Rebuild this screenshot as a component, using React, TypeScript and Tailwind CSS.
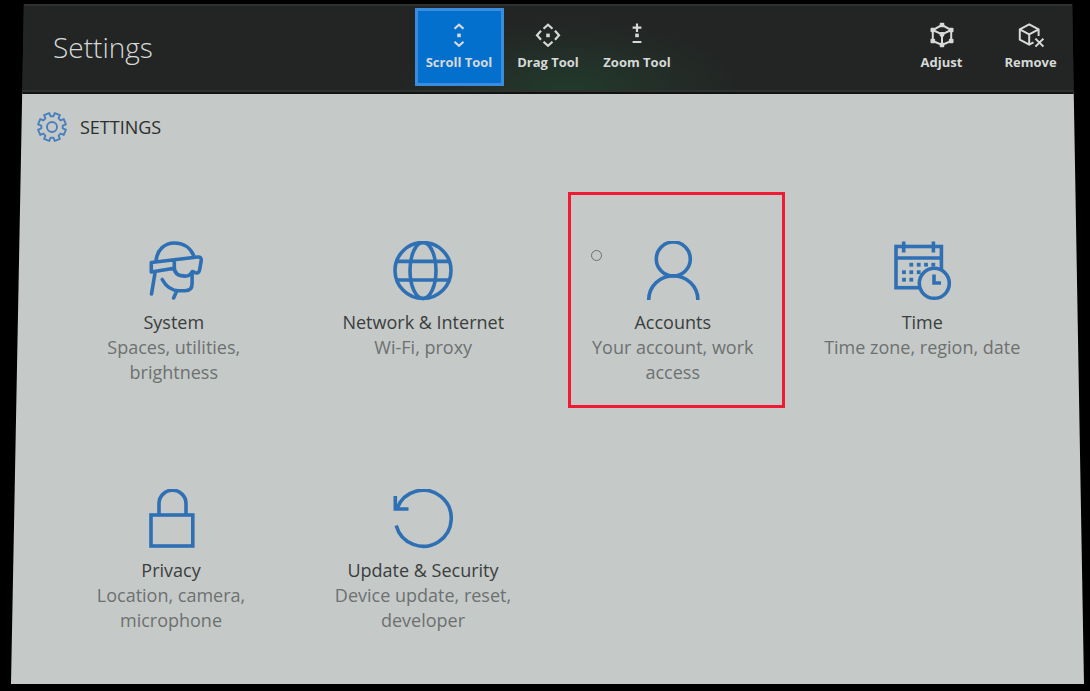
import type { ReactNode } from "react";

function ToolIcon({ children }: { children: ReactNode }) {
  return (
    <svg viewBox="0 0 26 26" className="size-[26px] shrink-0" fill="none" stroke="currentColor" strokeWidth="2.2" aria-hidden="true">
      {children}
    </svg>
  );
}

function TileIcon({ children }: { children: ReactNode }) {
  return (
    <svg viewBox="0 0 60 60" className="size-[60px] shrink-0 text-[#2f70b5]" fill="none" stroke="currentColor" strokeWidth="3.6" aria-hidden="true">
      {children}
    </svg>
  );
}

const dot = <rect x="11.2" y="11.6" width="3.6" height="3.6" fill="currentColor" stroke="none" />;

const tools = [
  {
    label: "Scroll Tool",
    active: true,
    icon: (
      <ToolIcon>
        <path d="M8.5 6.8 13 2.8l4.5 4M8.5 19.8l4.5 4 4.5-4" />
        {dot}
      </ToolIcon>
    ),
  },
  {
    label: "Drag Tool",
    active: false,
    icon: (
      <ToolIcon>
        <path d="M8.5 6.8 13 2.8l4.5 4M8.5 19.8l4.5 4 4.5-4M6 8.8l-4 4.5 4 4.5M20 8.8l4 4.5-4 4.5" />
        {dot}
      </ToolIcon>
    ),
  },
  {
    label: "Zoom Tool",
    active: false,
    icon: (
      <ToolIcon>
        <path d="M8.6 5.6h8.8M13 1.4v8.6M8.6 20h8.8" />
        {dot}
      </ToolIcon>
    ),
  },
];

const adjustNodes = [
  [13, 3],
  [13, 23],
  [3.8, 8],
  [22.2, 8],
  [3.8, 19],
  [22.2, 19],
  [13, 12.3],
];

const actions = [
  {
    label: "Adjust",
    active: false,
    icon: (
      <ToolIcon>
        <path strokeWidth="2" d="M13 3 22.200 8v11L13 23 3.800 19V8zM3.800 8l9.200 4.300L22.200 8M13 12.300V23" />
        {adjustNodes.map(([x, y]) => (
          <rect key={`${x}-${y}`} x={x - 2.3} y={y - 2.3} width="4.6" height="4.6" rx="1" fill="currentColor" stroke="none" />
        ))}
      </ToolIcon>
    ),
  },
  {
    label: "Remove",
    active: false,
    icon: (
      <ToolIcon>
        <path strokeWidth="2" d="M20.600 14V7.400l-9.400-5-9.400 5v10.200l9.400 5 4.300-2.200M1.800 7.400l9.400 5 9.400-5M11.200 12.400v10.200" />
        <path strokeWidth="2" d="m17.400 16.600 8 8M25.400 16.600l-8 8" />
      </ToolIcon>
    ),
  },
];

function ToolButton({ label, icon, active }: { label: string; icon: ReactNode; active: boolean }) {
  return (
    <button
      type="button"
      className={`flex h-[78px] w-[89px] flex-col items-center gap-[6px] border-[3px] pt-[11px] text-[13px] leading-4 font-bold whitespace-nowrap text-[#d6d9d8] ${
        active ? "border-[#3c8cdd] bg-[#0470ce]" : "border-transparent"
      }`}
    >
      {icon}
      {label}
    </button>
  );
}

const calendarDots = [
  [19.3, 23.7],
  [26.7, 23.7],
  [34, 23.7],
  [41.3, 23.7],
  [12, 31.2],
  [19.3, 31.2],
  [26.7, 31.2],
  [12, 38.7],
  [19.3, 38.7],
];

const systemIcon = (
  <TileIcon>
    <g strokeLinejoin="round">
      <path d="M12 20C13 8.500 21 2 30.500 2 40 2 47 7.500 50 15.500" />
      <path d="M30.300 27.300 7.300 31V21.500L53.500 16c2.800-.3 4 1 3.700 3.600L55.800 28c-.5 3.200-2 4.300-4 3.900l-3.500-1.400c-1.600 3.200-3.300 4.600-7 4.600-6.800 0-11-2.600-11-8.600v-7" />
      <path strokeLinecap="round" d="M11 32 7.500 53M18.200 38.500C21.500 44.500 27 49.700 35 49.700h6c4.600 0 7.100-2.500 7.100-7V33M32.500 50.500 29.600 57" />
    </g>
  </TileIcon>
);

const networkIcon = (
  <TileIcon>
    <circle cx="30" cy="29.500" r="28" />
    <ellipse cx="30" cy="29.500" rx="13" ry="28" />
    <path d="M3.500 20.400h53M3.500 39h53" />
  </TileIcon>
);

const accountsIcon = (
  <TileIcon>
    <circle cx="30.300" cy="18" r="17" />
    <path d="M5.700 59a24.600 24.300 0 0 1 49.200 0" />
  </TileIcon>
);

const timeIcon = (
  <TileIcon>
    <rect x="4" y="5.500" width="45.400" height="41.200" />
    <path d="M4 17h45.400M11.700 .5v11M41.400 .5v11" />
    {calendarDots.map(([x, y]) => (
      <rect key={`${x}-${y}`} x={x - 1.9} y={y - 1.9} width="3.800" height="3.800" fill="currentColor" stroke="none" />
    ))}
    <circle cx="42.300" cy="42.300" r="15" fill="#c5c9c8" />
    <path d="M42 33.500V42h7" />
  </TileIcon>
);

const privacyIcon = (
  <TileIcon>
    <rect x="10" y="26" width="41.800" height="31" />
    <path d="M18 26V14.500a13.500 13.300 0 0 1 27 0V26" />
  </TileIcon>
);

const updateIcon = (
  <TileIcon>
    <path d="M3.200 36.500A28 28 0 1 0 4 19.500" />
    <path d="M2.300 7v13h13.200" />
  </TileIcon>
);

const firstRow = [
  { title: "System", text: "Spaces, utilities, brightness", icon: systemIcon },
  { title: "Network & Internet", text: "Wi-Fi, proxy", icon: networkIcon },
  { title: "Accounts", text: "Your account, work access", icon: accountsIcon, marked: true },
  { title: "Time", text: "Time zone, region, date", icon: timeIcon },
];

const secondRow = [
  { title: "Privacy", text: "Location, camera, microphone", icon: privacyIcon },
  { title: "Update & Security", text: "Device update, reset, developer", icon: updateIcon },
];

function Tile({ title, text, icon, marked }: { title: string; text: string; icon: ReactNode; marked?: boolean }) {
  return (
    <a
      href="#"
      className="relative flex min-h-[216px] w-[217px] flex-col items-center justify-self-center px-2 pt-[49px] text-center text-lg leading-[25px]"
    >
      {icon}
      <span className="mt-[9px] whitespace-nowrap text-[#3a3e3d]">{title}</span>
      <span className="text-[#6d7170]">{text}</span>
      {marked && (
        <span className="absolute inset-y-0 -right-1 left-1 border-[3px] border-[#f01a35]">
          <span className="absolute top-[55px] left-[20px] block size-[11px] rounded-full border border-[#6b6f6e]" />
        </span>
      )}
    </a>
  );
}

/* Eight-toothed outline; the notches sit on the axes. */
const gearPath =
  Array.from({ length: 8 }, (_, i) => {
    const mid = ((i + 0.5) * Math.PI) / 4;
    return [
      [-0.26, 10.8],
      [-0.2, 14.2],
      [0.2, 14.2],
      [0.26, 10.8],
    ]
      .map(([offset, radius], j) => {
        const x = (16 + radius * Math.cos(mid + offset)).toFixed(2);
        const y = (16 + radius * Math.sin(mid + offset)).toFixed(2);
        return `${i === 0 && j === 0 ? "M" : "L"}${x} ${y}`;
      })
      .join("");
  }).join("") + "Z";

export default function App() {
  return (
    <div className="flex min-h-screen flex-col bg-black pt-1 pr-[6px] pb-[7px] pl-[11px] font-['Open_Sans','Noto_Sans',sans-serif]">
      <div className="flex flex-1 flex-col [clip-path:polygon(1.2%_0,98.9%_0,100%_100%,0_100%)]">
        <header className="grid grid-cols-[1fr_auto_1fr] border-y-2 border-[#2e3130] bg-[#232524] bg-[radial-gradient(ellipse_170px_70px_at_52%_100%,#223a2c,#232524)] pt-[2px] pb-[4px] pl-px">
          <h1 className="self-center pl-[41px] text-[28px] leading-9 font-light text-[#d6d9d8]">Settings</h1>
          <nav className="flex" aria-label="Tools">
            {tools.map((tool) => (
              <ToolButton key={tool.label} {...tool} />
            ))}
          </nav>
          <div className="flex justify-end pr-[9px]">
            {actions.map((action) => (
              <ToolButton key={action.label} {...action} />
            ))}
          </div>
        </header>
        <main className="flex-1 border-t-2 border-[#111312] bg-[#c5c9c8] pb-7">
          <div className="flex h-[66px] items-center gap-3 pl-[25px]">
            <svg viewBox="0 0 32 32" className="size-8" fill="none" stroke="#4a80bd" strokeWidth="1.9" strokeLinejoin="round" aria-hidden="true">
              <path d={gearPath} />
              <circle cx="16" cy="16" r="5" />
            </svg>
            <h2 className="text-lg leading-6 text-[#2b2e2d]">SETTINGS</h2>
          </div>
          <div className="mt-8 grid grid-cols-4 pr-[37px] pl-[38px]">
            {firstRow.map((item) => (
              <Tile key={item.title} {...item} />
            ))}
          </div>
          <div className="mt-8 grid grid-cols-4 pr-[31px] pl-[34px]">
            {secondRow.map((item) => (
              <Tile key={item.title} {...item} />
            ))}
          </div>
        </main>
      </div>
    </div>
  );
}
